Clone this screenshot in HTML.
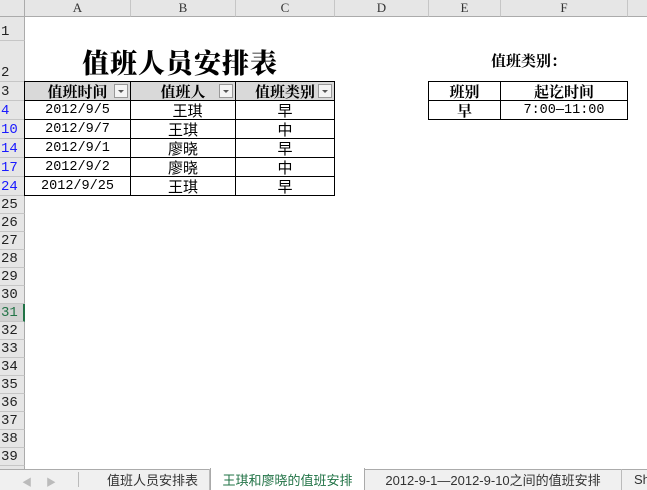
<!DOCTYPE html>
<html><head><meta charset="utf-8"><style>
*{margin:0;padding:0;box-sizing:border-box}
body{width:647px;height:490px;position:relative;overflow:hidden;background:#fff;font-family:"Liberation Mono","Noto Sans CJK SC",monospace;font-size:15px;color:#000}
.a{position:absolute}
.ch{top:0;height:17px;background:#e6e6e6;border-right:1px solid #c6c6c6;border-bottom:1px solid #ababab;text-align:center;font:13px/16px "Liberation Serif","Noto Serif CJK SC",serif;color:#333}
.rh{left:0;width:25px;background:#e6e6e6;border-bottom:1px solid #c6c6c6;border-right:1px solid #ababab;font:14px "Liberation Mono",monospace;color:#222;padding-left:1px;display:flex;align-items:flex-end;padding-bottom:0px}
.blue{color:#1a1aff}
.c{display:flex;align-items:center;justify-content:center;border-right:1px solid #000;border-bottom:1px solid #000}
.n{font-size:13.5px}
.hd{background:#d9d9d9;font-weight:bold;font-size:15px;font-family:"Noto Serif CJK SC",serif}
.dd{position:absolute;right:2px;top:2px;width:14px;height:14px;border:1px solid #999;background:#f4f4f4}
.dd:after{content:"";position:absolute;left:3px;top:5px;border-left:3px solid transparent;border-right:3px solid transparent;border-top:3px solid #555}
.tab{top:469px;height:21px;font-size:13px;font-family:"Liberation Sans","Noto Sans CJK SC",sans-serif;display:flex;align-items:center;justify-content:center;color:#333;border-right:1px solid #bbb}
</style></head><body>
<div class="a" style="left:0;top:0;width:25px;height:17px;background:#e6e6e6;border-right:1px solid #ababab;border-bottom:1px solid #ababab"></div>
<div class="a ch" style="left:25px;width:106px">A</div>
<div class="a ch" style="left:131px;width:105px">B</div>
<div class="a ch" style="left:236px;width:99px">C</div>
<div class="a ch" style="left:335px;width:94px">D</div>
<div class="a ch" style="left:429px;width:72px">E</div>
<div class="a ch" style="left:501px;width:127px">F</div>
<div class="a ch" style="left:628px;width:30px"></div>

<div class="a rh" style="top:17px;height:24px">1</div>
<div class="a rh" style="top:41px;height:41px">2</div>
<div class="a rh" style="top:82px;height:19px">3</div>
<div class="a rh blue" style="top:101px;height:19px">4</div>
<div class="a rh blue" style="top:120px;height:19px">10</div>
<div class="a rh blue" style="top:139px;height:19px">14</div>
<div class="a rh blue" style="top:158px;height:19px">17</div>
<div class="a rh blue" style="top:177px;height:19px">24</div>
<div class="a rh" style="top:196px;height:18px">25</div>
<div class="a rh" style="top:214px;height:18px">26</div>
<div class="a rh" style="top:232px;height:18px">27</div>
<div class="a rh" style="top:250px;height:18px">28</div>
<div class="a rh" style="top:268px;height:18px">29</div>
<div class="a rh" style="top:286px;height:18px">30</div>
<div class="a rh" style="top:304px;height:18px;background:#d2d2d2;color:#217346;border-right:2px solid #217346">31</div>
<div class="a rh" style="top:322px;height:18px">32</div>
<div class="a rh" style="top:340px;height:18px">33</div>
<div class="a rh" style="top:358px;height:18px">34</div>
<div class="a rh" style="top:376px;height:18px">35</div>
<div class="a rh" style="top:394px;height:18px">36</div>
<div class="a rh" style="top:412px;height:18px">37</div>
<div class="a rh" style="top:430px;height:18px">38</div>
<div class="a rh" style="top:448px;height:18px">39</div>
<div class="a rh" style="top:466px;height:4px"></div>

<div class="a" style="left:25px;top:44px;width:310px;text-align:center;font:900 27px/36px 'Noto Serif CJK SC',serif;letter-spacing:1px">值班人员安排表</div>
<div class="a" style="left:429px;top:50px;width:199px;text-align:center;font-weight:bold;font-size:15px;font-family:'Noto Serif CJK SC',serif">值班类别：</div>

<div class="a" style="left:24px;top:81px;width:311px;height:115px;border-left:1px solid #000;border-top:1px solid #000"></div>
<div class="a c hd" style="left:25px;top:82px;width:106px;height:19px">值班时间<span class="dd"></span></div>
<div class="a c hd" style="left:131px;top:82px;width:105px;height:19px">值班人<span class="dd"></span></div>
<div class="a c hd" style="left:236px;top:82px;width:99px;height:19px">值班类别<span class="dd"></span></div>

<div class="a c n" style="left:25px;top:101px;width:106px;height:19px">2012/9/5</div>
<div class="a c" style="left:131px;top:101px;width:105px;height:19px">&nbsp;王琪</div>
<div class="a c" style="left:236px;top:101px;width:99px;height:19px">早</div>
<div class="a c n" style="left:25px;top:120px;width:106px;height:19px">2012/9/7</div>
<div class="a c" style="left:131px;top:120px;width:105px;height:19px">王琪</div>
<div class="a c" style="left:236px;top:120px;width:99px;height:19px">中</div>
<div class="a c n" style="left:25px;top:139px;width:106px;height:19px">2012/9/1</div>
<div class="a c" style="left:131px;top:139px;width:105px;height:19px">廖晓</div>
<div class="a c" style="left:236px;top:139px;width:99px;height:19px">早</div>
<div class="a c n" style="left:25px;top:158px;width:106px;height:19px">2012/9/2</div>
<div class="a c" style="left:131px;top:158px;width:105px;height:19px">廖晓</div>
<div class="a c" style="left:236px;top:158px;width:99px;height:19px">中</div>
<div class="a c n" style="left:25px;top:177px;width:106px;height:19px">2012/9/25</div>
<div class="a c" style="left:131px;top:177px;width:105px;height:19px">王琪</div>
<div class="a c" style="left:236px;top:177px;width:99px;height:19px">早</div>

<div class="a" style="left:428px;top:81px;width:200px;height:39px;border-left:1px solid #000;border-top:1px solid #000"></div>
<div class="a c hd" style="left:429px;top:82px;width:72px;height:19px;background:#fff">班别</div>
<div class="a c hd" style="left:501px;top:82px;width:127px;height:19px;background:#fff">起讫时间</div>
<div class="a c hd" style="left:429px;top:101px;width:72px;height:19px;background:#fff">早</div>
<div class="a c n" style="left:501px;top:101px;width:127px;height:19px">7:00—11:00</div>

<div class="a" style="left:0;top:469px;width:647px;height:21px;background:#f0f0f0;border-top:1px solid #ababab"></div>
<div class="a" style="left:22px;top:474px;color:#bbb;font-size:10px">◀</div>
<div class="a" style="left:46px;top:474px;color:#bbb;font-size:10px">▶</div>
<div class="a tab" style="left:78px;width:1px;border-right:1px solid #bbb;height:15px;top:472px"></div>
<div class="a tab" style="left:96px;width:114px">值班人员安排表</div>
<div class="a tab" style="left:210px;width:155px;background:#fff;color:#217346;top:468px;height:22px;border-left:1px solid #aaa;border-right:1px solid #aaa">王琪和廖晓的值班安排</div>
<div class="a tab" style="left:365px;width:257px">2012-9-1—2012-9-10之间的值班安排</div>
<div class="a tab" style="left:622px;width:40px;justify-content:flex-start;padding-left:12px;border:none">Sh</div>
</body></html>
